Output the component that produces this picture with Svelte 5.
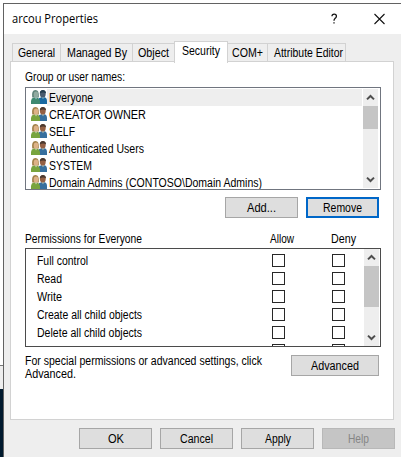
<script>
  const tabs = [
    { name: 'General', box: 48, text: 37, pad: 5 },
    { name: 'Managed By', box: 72, text: 60, pad: 6 },
    { name: 'Object', box: 42, text: 31, pad: 5 },
    { name: 'Security', box: 54, text: 38, pad: 7, active: true },
    { name: 'COM+', box: 40, text: 31, pad: 4 },
    { name: 'Attribute Editor', box: 79, text: 69, pad: 6 }
  ];
  const users = [
    ['Everyone', 44],
    ['CREATOR OWNER', 97],
    ['SELF', 26],
    ['Authenticated Users', 95],
    ['SYSTEM', 43],
    ['Domain Admins (CONTOSO\\Domain Admins)', 213]
  ];
  const permissions = [
    ['Full control', 51],
    ['Read', 25],
    ['Write', 25],
    ['Create all child objects', 105],
    ['Delete all child objects', 105],
    ['', 1]
  ];
</script>

{#snippet label(text, width)}
  <svg class="label" {width} height="14"><text x="0" y="11" textLength={width} lengthAdjust="spacingAndGlyphs">{text}</text></svg>
{/snippet}

{#snippet arrow(down)}
  <svg class="arrow" class:down width="15" height="17" viewBox="0 0 15 17"><path d="M4 10.4 7.5 7 11 10.4" /></svg>
{/snippet}

{#snippet people(selected)}
  <svg class="people" class:selected width="16" height="17" viewBox="0 0 16 17">
    <path class="blue" d="M7 15v-4.5Q8 8.6 10.5 8.2H13Q16 8.5 16 12v3Z" />
    <ellipse class="brown" cx="11.8" cy="5" rx="2.9" ry="3.7" />
    <path class="dark" d="M8.8 4.4Q8.7.9 11.9.9T15 4.4Q12.4 2.8 8.8 4.4Z" />
    <path class="green" d="M0 15v-3.2Q.3 9 3 8.5h3Q8.7 9 9 12v3Z" />
    <path class="hair" d="M1.2 8.4Q.2 1.2 4.4 1 8.4.9 7.8 8.4Z" />
    <ellipse class="face" cx="5" cy="5.7" rx="2.3" ry="3.1" />
    <path class="collar" d="m3.8 8.6 1.2 1.8 1.3-1.8Z" />
    <path class="collar" d="m11 8.6 1 1.6 1-1.6Z" />
  </svg>
{/snippet}

<div class="screen">
  <div class="behind"><i></i><b></b></div>
  <div class="window">
    <header>
      <h1>{@render label('arcou Properties', 86)}</h1>
      <svg class="controls" width="54" height="12" viewBox="0 0 54 12">
        <path class="q" d="M1 3.2Q1 1.2 3.2 1.2T5.4 3.2Q5.4 4.5 4 5.4 3 6.2 3 7.8M3 9.3v1.3" />
        <path d="m43.5 1 10 10m0-10-10 10" />
      </svg>
    </header>
    <nav>
      {#each tabs as t}
        <div class="tab" class:active={t.active} style:width="{t.box}px" style:padding-left="{t.pad}px">{@render label(t.name, t.text)}</div>
      {/each}
    </nav>
    <main>
      <div class="group">{@render label('Group or user names:', 100)}</div>
      <section class="list users">
        <div class="rows">
          {#each users as [name, width], i}
            <div class="user" class:current={i === 0}>
              {@render people(i === 0)}
              <div class="name">{@render label(name, width)}</div>
            </div>
          {/each}
        </div>
        <div class="scroll">{@render arrow(false)}<span></span>{@render arrow(true)}</div>
      </section>
      <div class="actions">
        <button>{@render label('Add...', 29)}</button>
        <button class="focus">{@render label('Remove', 39)}</button>
      </div>
      <div class="heading">
        <div class="first">{@render label('Permissions for Everyone', 117)}</div>
        <div class="allow">{@render label('Allow', 24)}</div>
        <div>{@render label('Deny', 25)}</div>
      </div>
      <section class="list perms">
        <div class="rows">
          {#each permissions as [name, width]}
            <div class="perm"><div class="what">{@render label(name, width)}</div><i></i><i></i></div>
          {/each}
        </div>
        <div class="scroll">{@render arrow(false)}<span></span>{@render arrow(true)}</div>
      </section>
      <div class="advanced">
        <div class="note">
          {@render label('For special permissions or advanced settings, click', 237)}
          {@render label('Advanced.', 51)}
        </div>
        <button>{@render label('Advanced', 48)}</button>
      </div>
    </main>
    <footer>
      <button>{@render label('OK', 16)}</button>
      <button>{@render label('Cancel', 33)}</button>
      <button>{@render label('Apply', 26)}</button>
      <button class="disabled">{@render label('Help', 21)}</button>
    </footer>
  </div>
</div>

<style>
  .screen, .screen * { box-sizing: border-box; }
  .screen { display: flex; width: 401px; height: 457px; overflow: hidden; background: #fff; font: 12px "Liberation Sans", Arial, sans-serif; }
  .label { display: block; overflow: visible; flex: none; }
  .label text { fill: #000; font-size: 12px; }
  .behind { width: 3px; padding-top: 365px; flex: none; }
  .behind i { display: block; height: 24px; border-top: 1px solid #777; background: #eee; }
  .behind b { display: block; height: 68px; background: #001a2e; }
  .window { width: 398px; height: 454px; margin-top: 3px; border: solid #626262; border-width: 1px 0 0 1px; background: #eee; flex: none; }
  header { display: flex; height: 30px; background: #fff; padding: 8px 16px 0 8px; justify-content: space-between; }
  h1 { margin: 0; font-weight: 400; }
  h1 :global(text) { font-family: "Open Sans", "Noto Sans", sans-serif; }
  .controls { margin-top: 1px; }
  .controls path { fill: none; stroke: #111; stroke-width: 1.1; }
  .controls .q { stroke-width: 1.3; }
  nav { display: flex; align-items: flex-end; height: 28px; padding-left: 8px; }
  .tab { height: 19px; padding-top: 2px; border: solid #d2d2d2; border-width: 1px 0 0 1px; flex: none; }
  .tab:last-child { border-right-width: 1px; }
  .active { height: 22px; margin: 0 -1px -1px 0; background: #fff; border-right-width: 1px; position: relative; }
  main { width: 384px; height: 359px; margin: -1px 0 0 6px; border: 1px solid #d2d2d2; background: #fff; padding: 8px 12px 0 14px; }
  .group { height: 17px; }
  .list { display: flex; width: 356px; border: 1px solid #70757f; padding: 1px; overflow: hidden; }
  .users { height: 103px; }
  .rows { flex: 1; overflow: hidden; }
  .users .rows { padding-left: 4px; margin-right: 1px; height: 100px; }
  .user { display: flex; height: 17px; }
  .people { flex: none; }
  .name { width: 100%; padding: 2px 0 0 2px; height: 17px; }
  .current .name { background: #eee; }
  .blue { fill: #376f9e; } .brown { fill: #946044; } .dark { fill: #4b392f; }
  .green { fill: #78a43e; } .hair { fill: #a18149; } .face { fill: #ddb287; } .collar { fill: #c5cfb2; }
  .selected .green { fill: #3e8971; } .selected .hair { fill: #60847b; } .selected .face { fill: #91aaa0; }
  .selected .blue { fill: #1768a1; } .selected .brown { fill: #485c70; } .selected .dark { fill: #253f51; } .selected .collar { fill: #99bfc2; }
  .scroll { display: flex; flex-direction: column; width: 15px; margin-right: 1px; background: #eee; flex: none; }
  .arrow { display: block; flex: none; }
  .arrow path { fill: none; stroke: #4e4e4e; stroke-width: 2; }
  .down { transform: rotate(180deg); margin-top: auto; }
  .scroll span { display: block; height: 23px; background: #c5c5c5; }
  .actions { display: flex; justify-content: flex-end; gap: 8px; padding: 7px 2px 0 0; }
  button { display: flex; width: 73px; height: 21px; align-items: center; justify-content: center; padding: 1px 0 0; border: 1px solid #a6a6a6; border-radius: 0; background: #dedede; flex: none; }
  .focus { border: 2px solid #0067c8; }
  .heading { display: flex; height: 16px; margin-top: 14px; }
  .first { width: 245px; }
  .allow { width: 61px; }
  .perms { height: 99px; border-color: #4b4b4b; padding: 0; }
  .perm { display: flex; height: 18px; padding-left: 11px; }
  .perms .rows { padding-top: 1px; }
  .what { width: 235px; padding-top: 4px; flex: none; }
  .perm i { width: 13px; height: 13px; margin: 4px 47px 0 0; border: 1px solid #282828; flex: none; }
  .perms .scroll span { height: 41px; }
  .advanced { display: flex; justify-content: space-between; padding: 7px 2px 0 0; }
  .note { display: flex; flex-direction: column; }
  .note :global(.label) { height: 13px; }
  .advanced button { width: 88px; margin-top: 1px; }
  footer { display: flex; gap: 8px; padding: 8px 0 0 75px; }
  .disabled { background: #c5c5c5; border-color: #b8b8b8; }
  .disabled :global(text) { fill: #858585; }
</style>
